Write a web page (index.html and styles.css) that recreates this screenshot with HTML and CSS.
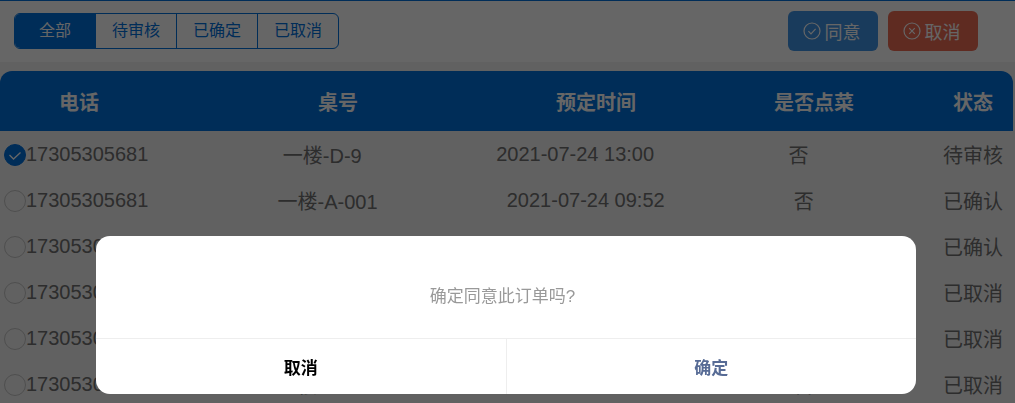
FILE: index.html
```html
<!DOCTYPE html>
<html lang="zh-CN">
<head>
    <meta charset="UTF-8">
    <meta name="viewport" content="width=device-width, initial-scale=1.0">
    <title>订单管理</title>
    <link rel="stylesheet" href="styles.css">
</head>
<body>

<div class="page">
    <div class="toolbar">
        <div class="tabs">
            <div class="tab active">全部</div>
            <div class="tab">待审核</div>
            <div class="tab">已确定</div>
            <div class="tab">已取消</div>
        </div>
        <div class="actions">
            <button class="action-btn agree">
                <svg class="btn-icon" viewBox="0 0 18 18"><circle cx="9" cy="9" r="8"/><path d="M5.4 9.2l2.6 2.6 4.6-5"/></svg>
                同意
            </button>
            <button class="action-btn cancel">
                <svg class="btn-icon" viewBox="0 0 18 18"><circle cx="9" cy="9" r="8"/><path d="M6.2 6.2l5.6 5.6M11.8 6.2l-5.6 5.6"/></svg>
                取消
            </button>
        </div>
    </div>

    <div class="table-head">
        <span>电话</span>
        <span>桌号</span>
        <span>预定时间</span>
        <span>是否点菜</span>
        <span>状态</span>
    </div>

    <div class="row">
        <div class="phone">
            <svg class="check on" viewBox="0 0 22 22"><circle cx="11" cy="11" r="10.5"/><path d="M5.5 11l4 4 7-6.5"/></svg>
            17305305681
        </div>
        <span>一楼-D-9</span>
        <span>2021-07-24 13:00</span>
        <span>否</span>
        <span>待审核</span>
    </div>
    <div class="row">
        <div class="phone"><svg class="check" viewBox="0 0 22 22"><circle cx="11" cy="11" r="10.5"/></svg>17305305681</div>
        <span>一楼-A-001</span>
        <span>2021-07-24 09:52</span>
        <span>否</span>
        <span>已确认</span>
    </div>
    <div class="row">
        <div class="phone"><svg class="check" viewBox="0 0 22 22"><circle cx="11" cy="11" r="10.5"/></svg>17305305681</div>
        <span>一楼-A-001</span>
        <span>2021-07-24 09:30</span>
        <span>否</span>
        <span>已确认</span>
    </div>
    <div class="row">
        <div class="phone"><svg class="check" viewBox="0 0 22 22"><circle cx="11" cy="11" r="10.5"/></svg>17305305681</div>
        <span>一楼-A-001</span>
        <span>2021-07-23 18:00</span>
        <span>否</span>
        <span>已取消</span>
    </div>
    <div class="row">
        <div class="phone"><svg class="check" viewBox="0 0 22 22"><circle cx="11" cy="11" r="10.5"/></svg>17305305681</div>
        <span>一楼-A-001</span>
        <span>2021-07-23 17:30</span>
        <span>否</span>
        <span>已取消</span>
    </div>
    <div class="row">
        <div class="phone"><svg class="check" viewBox="0 0 22 22"><circle cx="11" cy="11" r="10.5"/></svg>17305305681</div>
        <span>一楼-A-001</span>
        <span>2021-07-23 12:00</span>
        <span>否</span>
        <span>已取消</span>
    </div>
</div>

<div class="mask">
    <div class="modal">
        <div class="modal-body">确定同意此订单吗?</div>
        <div class="modal-foot">
            <div class="modal-btn">取消</div>
            <div class="modal-btn primary">确定</div>
        </div>
    </div>
</div>

</body>
</html>
```

FILE: styles.css
```css
html, body {
    height: 100%;
    margin: 0;
    overflow: hidden;
}

body {
    font-family: "Liberation Sans", "Noto Sans CJK SC", sans-serif;
    background-color: #f2f2f2;
    color: #707070;
}

.page {
    height: 100%;
    padding-right: 2px;
    box-sizing: border-box;
    border-top: 1px solid #0070dd;
}

.toolbar {
    height: 61px;
    margin: 0 -2px 9px 0;
    box-sizing: border-box;
    padding: 10px 37px 0 14px;
    display: flex;
    justify-content: space-between;
    align-items: flex-start;
    background-color: #ffffff;
}

.tabs {
    display: flex;
    margin-top: 2px;
    height: 36px;
    box-sizing: border-box;
    border: 1px solid #0070dd;
    border-radius: 6px;
    overflow: hidden;
}

.tab {
    width: 80px;
    line-height: 34px;
    font-size: 16px;
    text-align: center;
    color: #0070dd;
    border-left: 1px solid #0070dd;
}

.tab:first-child {
    border-left: none;
}

.tab.active {
    color: #ffffff;
    background-color: #0070dd;
}

.actions {
    display: flex;
    gap: 10px;
}

.action-btn {
    width: 90px;
    height: 40px;
    padding: 0 3px 0 0;
    border: none;
    border-radius: 6px;
    font-family: inherit;
    font-size: 18px;
    color: #ffffff;
    display: flex;
    align-items: center;
    justify-content: center;
    gap: 4px;
    opacity: 0.75;
}

.action-btn.agree {
    background-color: #0070dd;
}

.action-btn.cancel {
    background-color: #e83a1c;
}

.btn-icon {
    width: 18px;
    height: 18px;
    fill: none;
    stroke: #ffffff;
    stroke-width: 1.2;
}

.table-head {
    height: 60px;
    box-sizing: border-box;
    padding-left: 59px;
    display: grid;
    grid-template-columns: 259px 238px 218px 179px 40px;
    align-items: center;
    font-size: 20px;
    font-weight: bold;
    color: #ffffff;
    background-color: #0070dd;
    border-radius: 12px 12px 0 0;
    white-space: nowrap;
}

.row {
    height: 46px;
    box-sizing: border-box;
    padding: 0 10px 0 4px;
    display: flex;
    justify-content: space-between;
    align-items: center;
    font-size: 20px;
}

.phone {
    display: flex;
    align-items: center;
}

.check {
    width: 22px;
    height: 22px;
    margin-top: 2px;
    flex-shrink: 0;
    fill: none;
    stroke: #c4c4c4;
    stroke-width: 1;
}

.check.on {
    fill: #0070dd;
    stroke: #0070dd;
}

.check.on path {
    fill: none;
    stroke: #ffffff;
    stroke-width: 1.3;
}

.mask {
    position: fixed;
    top: 0;
    left: 0;
    right: 0;
    bottom: 0;
    background-color: rgba(0, 0, 0, 0.6);
    display: flex;
    justify-content: center;
    align-items: flex-end;
    padding-bottom: 9px;
    box-sizing: border-box;
}

.modal {
    width: 820px;
    height: 158px;
    display: flex;
    flex-direction: column;
    margin-right: 3px;
    background-color: #ffffff;
    border-radius: 14px;
    overflow: hidden;
}

.modal-body {
    height: 102px;
    box-sizing: border-box;
    padding: 14px 7px 0 0;
    display: flex;
    align-items: center;
    justify-content: center;
    font-size: 17px;
    color: #999999;
}

.modal-foot {
    flex: 1;
    display: flex;
    border-top: 1px solid #eeeeee;
}

.modal-btn {
    flex: 1;
    display: flex;
    align-items: center;
    justify-content: center;
    font-size: 17px;
    font-weight: bold;
    color: #000000;
}

.modal-btn.primary {
    color: #576b95;
    border-left: 1px solid #eeeeee;
}
```
